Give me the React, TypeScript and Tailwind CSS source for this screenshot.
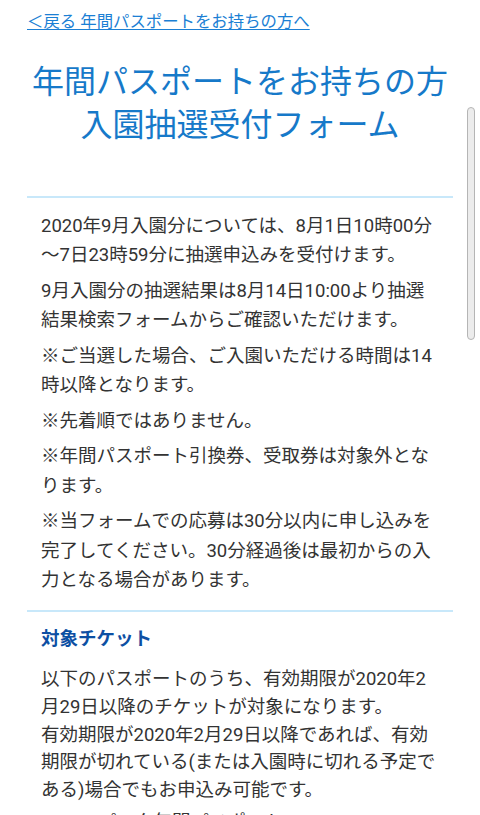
const notes = [
  "2020年9月入園分については、8月1日10時00分〜7日23時59分に抽選申込みを受付けます。",
  "9月入園分の抽選結果は8月14日10:00より抽選結果検索フォームからご確認いただけます。",
  "※ご当選した場合、ご入園いただける時間は14時以降となります。",
  "※先着順ではありません。",
  "※年間パスポート引換券、受取券は対象外となります。",
  "※当フォームでの応募は30分以内に申し込みを完了してください。30分経過後は最初からの入力となる場合があります。",
];

export default function App() {
  return (
    <div
      lang="ja"
      className="relative h-[815px] overflow-hidden bg-white [line-break:loose]"
      style={{ fontFamily: 'Roboto, "Noto Sans CJK JP", sans-serif' }}
    >
      <div className="px-[27px]">
        <a
          href="#"
          className="block pt-[10px] text-[16.4px] leading-[24px] text-[#1b7fd4] underline underline-offset-2"
        >
          ＜戻る 年間パスポートをお持ちの方へ
        </a>

        <h1 className="mt-[27px] text-center text-[32px] leading-[43px] font-normal text-[#1679c9]">
          年間パスポートをお持ちの方
          <br />
          入園抽選受付フォーム
        </h1>

        <section className="mt-[49px] border-t-2 border-[#c8e8fa] pl-[14px] pr-[12px] pt-[14px] pb-[9px] text-[18.5px] leading-[29.2px] text-[#333333]">
          {notes.map((t) => (
            <p key={t} className="mb-[6.5px]">
              {t}
            </p>
          ))}
        </section>

        <section className="border-t-2 border-[#c8e8fa] pl-[14px] pr-[12px] pt-[14px] text-[18.5px] text-[#333333]">
          <h2 className="text-[18.5px] leading-[27px] font-bold text-[#0d4fa3]">対象チケット</h2>
          <p className="mt-[13px] leading-[27.6px]">
            以下のパスポートのうち、有効期限が2020年2月29日以降のチケットが対象になります。
            <br />
            有効期限が2020年2月29日以降であれば、有効期限が切れている(または入園時に切れる予定である)場合でもお申込み可能です。
          </p>
          <ul className="mt-[4px] pl-[28px] leading-[28px]">
            <li>・2パーク年間パスポート</li>
            <li>・ディズニーランド年間パスポート</li>
          </ul>
        </section>
      </div>

      {/* scroll indicator */}
      <div className="absolute left-[467px] top-[107px] h-[233px] w-[8px] rounded-full border border-[#b5b5b5] bg-[#ececec]" />
    </div>
  );
}
